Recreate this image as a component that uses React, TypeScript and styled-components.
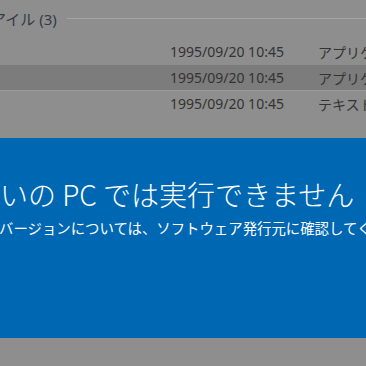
import React from 'react';
import styled, { createGlobalStyle } from 'styled-components';

const GlobalStyle = createGlobalStyle`
  html, body {
    margin: 0;
    padding: 0;
    width: 366px;
    height: 366px;
    overflow: hidden;
    background: #8e8e8e;
    font-family: 'Noto Sans', 'Noto Sans CJK JP', sans-serif;
  }
`;

const Page = styled.div`
  width: 366px;
  height: 366px;
  display: flex;
  flex-direction: column;
  overflow: hidden;
`;

const Explorer = styled.div`
  height: 138px;
  display: flex;
  flex-direction: column;
`;

const GroupHeader = styled.div`
  height: 39px;
  display: flex;
  align-items: center;
  gap: 10px;
  box-sizing: border-box;
`;

const GroupTitle = styled.span`
  font-size: 15px;
  color: #333b44;
  white-space: nowrap;
  margin-left: -9px;
  margin-top: -3px;
`;

const GroupLine = styled.div`
  flex: 1;
  height: 1px;
  background: #a3a3a3;
  margin-top: -3px;
`;

const Row = styled.div<{ $selected?: boolean }>`
  height: 26px;
  display: grid;
  grid-template-columns: 170px 148px 1fr;
  align-items: center;
  box-sizing: border-box;
  background: ${(p) => (p.$selected ? '#7c7c7c' : 'transparent')};
  border-bottom: 1px solid ${(p) => (p.$selected ? '#9a9a9a' : 'transparent')};
  font-size: 14px;
  color: #333;
  white-space: nowrap;
  overflow: hidden;
`;

const Cell = styled.span`
  overflow: hidden;
`;

const Dialog = styled.div`
  height: 200px;
  background: #0067b3;
  color: #fff;
  display: flex;
  flex-direction: column;
  padding-top: 35px;
  box-sizing: border-box;
  overflow: hidden;
`;

const Title = styled.div`
  font-family: 'Noto Sans CJK JP', sans-serif;
  font-weight: 300;
  font-size: 28px;
  line-height: 42px;
  white-space: nowrap;
`;

const Message = styled.div`
  font-family: 'Noto Sans CJK JP', sans-serif;
  font-size: 14.4px;
  line-height: 20px;
  margin-top: 3px;
  white-space: nowrap;
  margin-left: -1px;
`;

const files = [
  { date: '1995/09/20 10:45', type: 'アプリケーション' },
  { date: '1995/09/20 10:45', type: 'アプリケーション', selected: true },
  { date: '1995/09/20 10:45', type: 'テキスト ドキュメント' },
];

function App() {
  return (
    <Page>
      <GlobalStyle />
      <Explorer>
        <GroupHeader>
          <GroupTitle>アイル (3)</GroupTitle>
          <GroupLine />
        </GroupHeader>
        {files.map((f, i) => (
          <Row key={i} $selected={f.selected}>
            <Cell />
            <Cell>{f.date}</Cell>
            <Cell>{f.type}</Cell>
          </Row>
        ))}
      </Explorer>
      <Dialog>
        <Title>いの PC では実行できません</Title>
        <Message>バージョンについては、ソフトウェア発行元に確認してください。</Message>
      </Dialog>
    </Page>
  );
}

export default App;
